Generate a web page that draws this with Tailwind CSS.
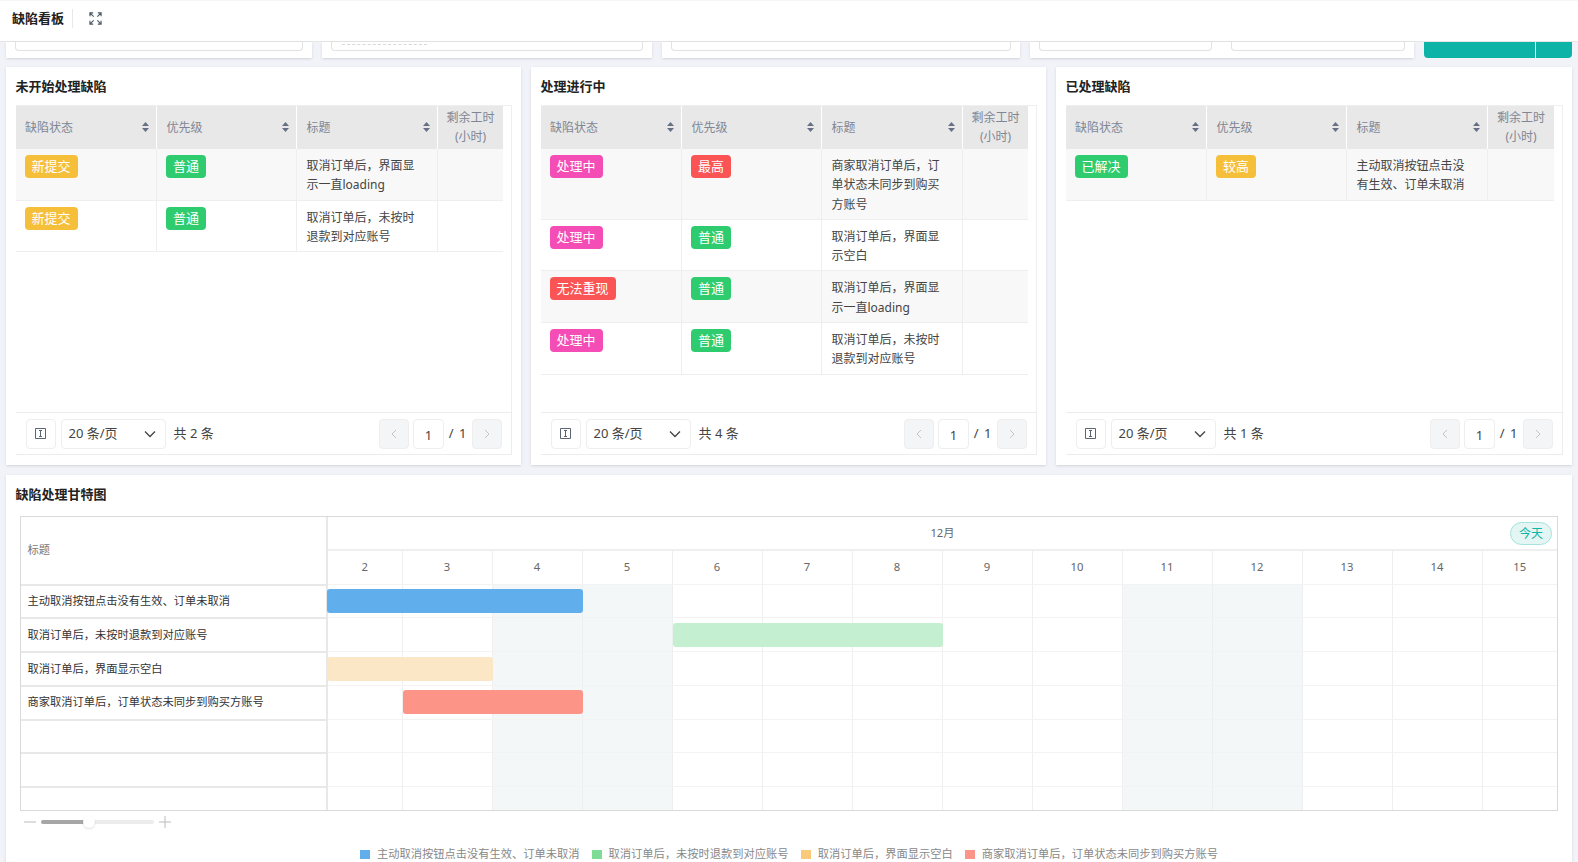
<!DOCTYPE html>
<html>
  <head>
    <meta charset="utf-8" />
    <script src="https://cdn.jsdelivr.net/npm/@tailwindcss/browser@4"></script>
  </head>
  <body class="h-[862px] overflow-hidden bg-[#f2f3f8] text-[#333] font-['Noto_Sans','Noto_Sans_CJK_SC',sans-serif]">
    <!-- header -->
    <header class="h-[42px] bg-white border-t border-t-[#f5f5f5] border-b border-b-[#e6e6e6] flex items-center pl-[12px] pb-[6px]">
      <h1 class="text-[13px] font-bold text-[#222] pr-[8px] border-r border-[#e8e8e8] leading-[19px]">缺陷看板</h1>
      <svg class="ml-[16px] w-[13px] h-[13px]" viewBox="0 0 14 14" fill="none" stroke="#4b5563" stroke-width="1.2">
        <path d="M1 4.500V1h3.500M13 4.500V1H9.500M1 9.500V13h3.500M13 9.500V13H9.500M1.500 1.500l3.500 3.500M12.500 1.500L9 5M1.500 12.500L5 9M12.500 12.500L9 9" />
      </svg>
    </header>

    <!-- filter row, scrolled mostly out of view -->
    <div class="h-[16px] flex pl-[6px] pr-[6px] gap-[10px]">
      <div class="w-[306px] bg-white shadow-sm px-[9px]">
        <div class="h-[9px] border border-t-0 border-[#e2e2e2] rounded-b-[4px]"></div>
      </div>
      <div class="w-[330px] bg-white shadow-sm px-[9px]">
        <div class="h-[9px] border border-t-0 border-[#e2e2e2] rounded-b-[4px] pl-[10px]">
          <div class="w-[85px] h-[3px] border-b border-dashed border-[#d8d8d8]"></div>
        </div>
      </div>
      <div class="w-[358px] bg-white shadow-sm px-[9px]">
        <div class="h-[9px] border border-t-0 border-[#e2e2e2] rounded-b-[4px]"></div>
      </div>
      <div class="w-[384px] bg-white shadow-sm flex gap-[19px] px-[9px]">
        <div class="w-[173px] h-[9px] border border-t-0 border-[#e2e2e2] rounded-b-[4px]"></div>
        <div class="w-[174px] h-[9px] border border-t-0 border-[#e2e2e2] rounded-b-[4px]"></div>
      </div>
      <div class="flex-1 flex bg-[#0db3a6] rounded-b-[4px]">
        <div class="flex-1 border-r border-white"></div>
        <div class="w-[36px]"></div>
      </div>
    </div>

    <!-- defect tables -->
    <div class="grid grid-cols-[515px_515px_1fr] gap-[10px] px-[6px] mt-[9px]">
      <!-- not started -->
      <section class="h-[398px] bg-white shadow-sm pl-[9.500px] pr-[9px] flex flex-col">
        <h2 class="h-[37.500px] pt-[9.500px] text-[13px] font-bold leading-[19px] text-[#222]">未开始处理缺陷</h2>
        <div class="flex-1 border-t border-x border-[#efefef] border-l-0 pr-[8px]">
          <table class="w-full table-fixed border-collapse text-[12px] leading-[19.300px]">
            <thead class="bg-[#e8e8e8] text-[#808695]">
              <tr class="h-[43.500px]">
                <th class="w-[141px] border-r border-white pl-[9.500px] pr-[7px] font-normal text-left"><div class="flex items-center justify-between">缺陷状态<svg class="w-[7px] h-[10px]" viewBox="0 0 7 10" fill="#667085"><path d="M3.500 0L7 4H0zM3.500 10L0 6h7z"/></svg></div></th>
                <th class="w-[140px] border-r border-white pl-[9.500px] pr-[7px] font-normal text-left"><div class="flex items-center justify-between">优先级<svg class="w-[7px] h-[10px]" viewBox="0 0 7 10" fill="#667085"><path d="M3.500 0L7 4H0zM3.500 10L0 6h7z"/></svg></div></th>
                <th class="w-[141px] border-r border-white pl-[9.500px] pr-[7px] font-normal text-left"><div class="flex items-center justify-between">标题<svg class="w-[7px] h-[10px]" viewBox="0 0 7 10" fill="#667085"><path d="M3.500 0L7 4H0zM3.500 10L0 6h7z"/></svg></div></th>
                <th class="font-normal text-center">剩余工时<br />(小时)</th>
              </tr>
            </thead>
            <tbody class="text-[#444]">
              <tr class="bg-[#f8f8f8] border-b border-[#eee] align-top">
                <td class="border-r border-[#eee] pl-[9px] py-[6px]"><span class="inline-block h-[23px] px-[7px] bg-[#f6bf3a] rounded-[4px] text-[13px] leading-[23px] text-white">新提交</span></td>
                <td class="border-r border-[#eee] pl-[9px] py-[6px]"><span class="inline-block h-[23px] px-[7px] bg-[#2ecc6e] rounded-[4px] text-[13px] leading-[23px] text-white">普通</span></td>
                <td class="border-r border-[#eee] pl-[9.500px] pr-[20px] pt-[7px] pb-[5px]">取消订单后，界面显示一直loading</td>
                <td></td>
              </tr>
              <tr class="border-b border-[#eee] align-top">
                <td class="border-r border-[#eee] pl-[9px] py-[6px]"><span class="inline-block h-[23px] px-[7px] bg-[#f6bf3a] rounded-[4px] text-[13px] leading-[23px] text-white">新提交</span></td>
                <td class="border-r border-[#eee] pl-[9px] py-[6px]"><span class="inline-block h-[23px] px-[7px] bg-[#2ecc6e] rounded-[4px] text-[13px] leading-[23px] text-white">普通</span></td>
                <td class="border-r border-[#eee] pl-[9.500px] pr-[20px] pt-[7px] pb-[5px]">取消订单后，未按时退款到对应账号</td>
                <td></td>
              </tr>
            </tbody>
          </table>
        </div>
        <div class="h-[43px] mb-[10px] border border-[#ececec] border-l-0 flex items-center pl-[10px] pr-[9px] text-[13px] text-[#444]">
          <button class="w-[30px] h-[30px] border border-[#eee] rounded-[4px] flex items-center justify-center">
            <svg class="w-[11px] h-[11px]" viewBox="0 0 11 11" fill="none" stroke="#5b6472"><path d="M.5.500h10v10H.500zM5.500 2.500v6M4 2.500h3M4 8.500h3"/></svg>
          </button>
          <div class="ml-[5px] w-[105px] h-[30px] pt-[1px] border border-[#eee] rounded-[4px] flex items-center justify-between pl-[7px] pr-[9px]">20 条/页
            <svg class="w-[12px] h-[8px]" viewBox="0 0 12 8" fill="none" stroke="#444" stroke-width="1.300"><path d="M1 1.500l5 5 5-5"/></svg>
          </div>
          <span class="ml-[8px] pt-[1px]">共 2 条</span>
          <button class="ml-auto w-[30px] h-[30px] bg-[#f4f5f7] border border-[#eee] rounded-[4px] flex items-center justify-center">
            <svg class="w-[6px] h-[10px]" viewBox="0 0 6 10" fill="none" stroke="#c0c4cc"><path d="M5 1L1 5l4 4"/></svg>
          </button>
          <div class="ml-[4px] w-[31px] h-[30px] border border-[#eee] rounded-[4px] text-center leading-[31px]">1</div>
          <span class="mx-[3px] w-[22px] text-center tracking-[1px]">/ 1</span>
          <button class="w-[30px] h-[30px] bg-[#f4f5f7] border border-[#eee] rounded-[4px] flex items-center justify-center">
            <svg class="w-[6px] h-[10px]" viewBox="0 0 6 10" fill="none" stroke="#c0c4cc"><path d="M1 1l4 4-4 4"/></svg>
          </button>
        </div>
      </section>

      <!-- in progress -->
      <section class="h-[398px] bg-white shadow-sm pl-[9.500px] pr-[9px] flex flex-col">
        <h2 class="h-[37.500px] pt-[9.500px] text-[13px] font-bold leading-[19px] text-[#222]">处理进行中</h2>
        <div class="flex-1 border-t border-x border-[#efefef] border-l-0 pr-[8px]">
          <table class="w-full table-fixed border-collapse text-[12px] leading-[19.300px]">
            <thead class="bg-[#e8e8e8] text-[#808695]">
              <tr class="h-[43.500px]">
                <th class="w-[141px] border-r border-white pl-[9.500px] pr-[7px] font-normal text-left"><div class="flex items-center justify-between">缺陷状态<svg class="w-[7px] h-[10px]" viewBox="0 0 7 10" fill="#667085"><path d="M3.500 0L7 4H0zM3.500 10L0 6h7z"/></svg></div></th>
                <th class="w-[140px] border-r border-white pl-[9.500px] pr-[7px] font-normal text-left"><div class="flex items-center justify-between">优先级<svg class="w-[7px] h-[10px]" viewBox="0 0 7 10" fill="#667085"><path d="M3.500 0L7 4H0zM3.500 10L0 6h7z"/></svg></div></th>
                <th class="w-[141px] border-r border-white pl-[9.500px] pr-[7px] font-normal text-left"><div class="flex items-center justify-between">标题<svg class="w-[7px] h-[10px]" viewBox="0 0 7 10" fill="#667085"><path d="M3.500 0L7 4H0zM3.500 10L0 6h7z"/></svg></div></th>
                <th class="font-normal text-center">剩余工时<br />(小时)</th>
              </tr>
            </thead>
            <tbody class="text-[#444]">
              <tr class="bg-[#f8f8f8] border-b border-[#eee] align-top">
                <td class="border-r border-[#eee] pl-[9px] py-[6px]"><span class="inline-block h-[23px] px-[7px] bg-[#f44db5] rounded-[4px] text-[13px] leading-[23px] text-white">处理中</span></td>
                <td class="border-r border-[#eee] pl-[9px] py-[6px]"><span class="inline-block h-[23px] px-[7px] bg-[#fb5454] rounded-[4px] text-[13px] leading-[23px] text-white">最高</span></td>
                <td class="border-r border-[#eee] pl-[9.500px] pr-[20px] pt-[7px] pb-[5px]">商家取消订单后，订单状态未同步到购买方账号</td>
                <td></td>
              </tr>
              <tr class="border-b border-[#eee] align-top">
                <td class="border-r border-[#eee] pl-[9px] py-[6px]"><span class="inline-block h-[23px] px-[7px] bg-[#f44db5] rounded-[4px] text-[13px] leading-[23px] text-white">处理中</span></td>
                <td class="border-r border-[#eee] pl-[9px] py-[6px]"><span class="inline-block h-[23px] px-[7px] bg-[#2ecc6e] rounded-[4px] text-[13px] leading-[23px] text-white">普通</span></td>
                <td class="border-r border-[#eee] pl-[9.500px] pr-[20px] pt-[7px] pb-[5px]">取消订单后，界面显示空白</td>
                <td></td>
              </tr>
              <tr class="bg-[#f8f8f8] border-b border-[#eee] align-top">
                <td class="border-r border-[#eee] pl-[9px] py-[6px]"><span class="inline-block h-[23px] px-[7px] bg-[#fb5454] rounded-[4px] text-[13px] leading-[23px] text-white">无法重现</span></td>
                <td class="border-r border-[#eee] pl-[9px] py-[6px]"><span class="inline-block h-[23px] px-[7px] bg-[#2ecc6e] rounded-[4px] text-[13px] leading-[23px] text-white">普通</span></td>
                <td class="border-r border-[#eee] pl-[9.500px] pr-[20px] pt-[7px] pb-[5px]">取消订单后，界面显示一直loading</td>
                <td></td>
              </tr>
              <tr class="border-b border-[#eee] align-top">
                <td class="border-r border-[#eee] pl-[9px] py-[6px]"><span class="inline-block h-[23px] px-[7px] bg-[#f44db5] rounded-[4px] text-[13px] leading-[23px] text-white">处理中</span></td>
                <td class="border-r border-[#eee] pl-[9px] py-[6px]"><span class="inline-block h-[23px] px-[7px] bg-[#2ecc6e] rounded-[4px] text-[13px] leading-[23px] text-white">普通</span></td>
                <td class="border-r border-[#eee] pl-[9.500px] pr-[20px] pt-[7px] pb-[5px]">取消订单后，未按时退款到对应账号</td>
                <td></td>
              </tr>
            </tbody>
          </table>
        </div>
        <div class="h-[43px] mb-[10px] border border-[#ececec] border-l-0 flex items-center pl-[10px] pr-[9px] text-[13px] text-[#444]">
          <button class="w-[30px] h-[30px] border border-[#eee] rounded-[4px] flex items-center justify-center">
            <svg class="w-[11px] h-[11px]" viewBox="0 0 11 11" fill="none" stroke="#5b6472"><path d="M.5.500h10v10H.500zM5.500 2.500v6M4 2.500h3M4 8.500h3"/></svg>
          </button>
          <div class="ml-[5px] w-[105px] h-[30px] pt-[1px] border border-[#eee] rounded-[4px] flex items-center justify-between pl-[7px] pr-[9px]">20 条/页
            <svg class="w-[12px] h-[8px]" viewBox="0 0 12 8" fill="none" stroke="#444" stroke-width="1.300"><path d="M1 1.500l5 5 5-5"/></svg>
          </div>
          <span class="ml-[8px] pt-[1px]">共 4 条</span>
          <button class="ml-auto w-[30px] h-[30px] bg-[#f4f5f7] border border-[#eee] rounded-[4px] flex items-center justify-center">
            <svg class="w-[6px] h-[10px]" viewBox="0 0 6 10" fill="none" stroke="#c0c4cc"><path d="M5 1L1 5l4 4"/></svg>
          </button>
          <div class="ml-[4px] w-[31px] h-[30px] border border-[#eee] rounded-[4px] text-center leading-[31px]">1</div>
          <span class="mx-[3px] w-[22px] text-center tracking-[1px]">/ 1</span>
          <button class="w-[30px] h-[30px] bg-[#f4f5f7] border border-[#eee] rounded-[4px] flex items-center justify-center">
            <svg class="w-[6px] h-[10px]" viewBox="0 0 6 10" fill="none" stroke="#c0c4cc"><path d="M1 1l4 4-4 4"/></svg>
          </button>
        </div>
      </section>

      <!-- done -->
      <section class="h-[398px] bg-white shadow-sm pl-[9.500px] pr-[9px] flex flex-col">
        <h2 class="h-[37.500px] pt-[9.500px] text-[13px] font-bold leading-[19px] text-[#222]">已处理缺陷</h2>
        <div class="flex-1 border-t border-x border-[#efefef] border-l-0 pr-[8px]">
          <table class="w-full table-fixed border-collapse text-[12px] leading-[19.300px]">
            <thead class="bg-[#e8e8e8] text-[#808695]">
              <tr class="h-[43.500px]">
                <th class="w-[141px] border-r border-white pl-[9.500px] pr-[7px] font-normal text-left"><div class="flex items-center justify-between">缺陷状态<svg class="w-[7px] h-[10px]" viewBox="0 0 7 10" fill="#667085"><path d="M3.500 0L7 4H0zM3.500 10L0 6h7z"/></svg></div></th>
                <th class="w-[140px] border-r border-white pl-[9.500px] pr-[7px] font-normal text-left"><div class="flex items-center justify-between">优先级<svg class="w-[7px] h-[10px]" viewBox="0 0 7 10" fill="#667085"><path d="M3.500 0L7 4H0zM3.500 10L0 6h7z"/></svg></div></th>
                <th class="w-[141px] border-r border-white pl-[9.500px] pr-[7px] font-normal text-left"><div class="flex items-center justify-between">标题<svg class="w-[7px] h-[10px]" viewBox="0 0 7 10" fill="#667085"><path d="M3.500 0L7 4H0zM3.500 10L0 6h7z"/></svg></div></th>
                <th class="font-normal text-center">剩余工时<br />(小时)</th>
              </tr>
            </thead>
            <tbody class="text-[#444]">
              <tr class="bg-[#f8f8f8] border-b border-[#eee] align-top">
                <td class="border-r border-[#eee] pl-[9px] py-[6px]"><span class="inline-block h-[23px] px-[7px] bg-[#2ecc6e] rounded-[4px] text-[13px] leading-[23px] text-white">已解决</span></td>
                <td class="border-r border-[#eee] pl-[9px] py-[6px]"><span class="inline-block h-[23px] px-[7px] bg-[#f6bf3a] rounded-[4px] text-[13px] leading-[23px] text-white">较高</span></td>
                <td class="border-r border-[#eee] pl-[9.500px] pr-[20px] pt-[7px] pb-[5px]">主动取消按钮点击没有生效、订单未取消</td>
                <td></td>
              </tr>
            </tbody>
          </table>
        </div>
        <div class="h-[43px] mb-[10px] border border-[#ececec] border-l-0 flex items-center pl-[10px] pr-[9px] text-[13px] text-[#444]">
          <button class="w-[30px] h-[30px] border border-[#eee] rounded-[4px] flex items-center justify-center">
            <svg class="w-[11px] h-[11px]" viewBox="0 0 11 11" fill="none" stroke="#5b6472"><path d="M.5.500h10v10H.500zM5.500 2.500v6M4 2.500h3M4 8.500h3"/></svg>
          </button>
          <div class="ml-[5px] w-[105px] h-[30px] pt-[1px] border border-[#eee] rounded-[4px] flex items-center justify-between pl-[7px] pr-[9px]">20 条/页
            <svg class="w-[12px] h-[8px]" viewBox="0 0 12 8" fill="none" stroke="#444" stroke-width="1.300"><path d="M1 1.500l5 5 5-5"/></svg>
          </div>
          <span class="ml-[8px] pt-[1px]">共 1 条</span>
          <button class="ml-auto w-[30px] h-[30px] bg-[#f4f5f7] border border-[#eee] rounded-[4px] flex items-center justify-center">
            <svg class="w-[6px] h-[10px]" viewBox="0 0 6 10" fill="none" stroke="#c0c4cc"><path d="M5 1L1 5l4 4"/></svg>
          </button>
          <div class="ml-[4px] w-[31px] h-[30px] border border-[#eee] rounded-[4px] text-center leading-[31px]">1</div>
          <span class="mx-[3px] w-[22px] text-center tracking-[1px]">/ 1</span>
          <button class="w-[30px] h-[30px] bg-[#f4f5f7] border border-[#eee] rounded-[4px] flex items-center justify-center">
            <svg class="w-[6px] h-[10px]" viewBox="0 0 6 10" fill="none" stroke="#c0c4cc"><path d="M1 1l4 4-4 4"/></svg>
          </button>
        </div>
      </section>
    </div>

    <!-- gantt -->
    <section class="mx-[6px] mt-[10px] h-[400px] bg-white shadow-sm">
      <h2 class="h-[41px] pt-[9.500px] pl-[9.500px] text-[13px] font-bold leading-[19px] text-[#222]">缺陷处理甘特图</h2>
      <div class="ml-[13.500px] w-[1538.500px] h-[295px] border border-[#d9d9d9] flex text-[11.250px] text-[#333]">
        <!-- title column -->
        <div class="w-[307.500px] shrink-0 border-r-2 border-[#e8e8e8] flex flex-col">
          <div class="h-[68.500px] pt-[1px] border-b-2 border-[#e8e8e8] flex items-center pl-[7px] text-[#777]">标题</div>
          <div class="h-[33.800px] border-b-2 border-[#e8e8e8] flex items-center pl-[7px]">主动取消按钮点击没有生效、订单未取消</div>
          <div class="h-[33.800px] border-b-2 border-[#e8e8e8] flex items-center pl-[7px]">取消订单后，未按时退款到对应账号</div>
          <div class="h-[33.800px] border-b-2 border-[#e8e8e8] flex items-center pl-[7px]">取消订单后，界面显示空白</div>
          <div class="h-[33.800px] border-b-2 border-[#e8e8e8] flex items-center pl-[7px]">商家取消订单后，订单状态未同步到购买方账号</div>
          <div class="h-[33.800px] border-b-2 border-[#e8e8e8]"></div>
          <div class="h-[33.800px] border-b-2 border-[#e8e8e8]"></div>
        </div>
        <!-- timeline -->
        <div class="flex-1 min-w-0 flex flex-col">
          <div class="relative h-[33.500px] pt-[1px] border-b-2 border-[#efefef] flex items-center justify-center text-[#666]">12月
            <span class="absolute right-[5px] top-[5px] w-[42px] h-[23px] rounded-full border border-[#a5e3dc] bg-[#e4f6f4] text-[#14b3a5] text-[12px] leading-[21px] text-center">今天</span>
          </div>
          <div class="h-[34px] grid grid-cols-[74.500px_repeat(12,90px)_1fr] text-center leading-[32px] text-[#666] border-b border-[#f3f3f3]">
            <div class="border-r border-[#efefef]">2</div>
            <div class="border-r border-[#efefef]">3</div>
            <div class="border-r border-[#efefef]">4</div>
            <div class="border-r border-[#efefef]">5</div>
            <div class="border-r border-[#efefef]">6</div>
            <div class="border-r border-[#efefef]">7</div>
            <div class="border-r border-[#efefef]">8</div>
            <div class="border-r border-[#efefef]">9</div>
            <div class="border-r border-[#efefef]">10</div>
            <div class="border-r border-[#efefef]">11</div>
            <div class="border-r border-[#efefef]">12</div>
            <div class="border-r border-[#efefef]">13</div>
            <div class="border-r border-[#efefef]">14</div>
            <div>15</div>
          </div>
          <div class="flex-1 grid grid-cols-[74.500px_repeat(12,90px)_1fr] grid-rows-[repeat(6,33.800px)_1fr]">
            <!-- day columns -->
            <div class="col-start-1 row-start-1 row-span-7 border-r border-[#f0f0f0]"></div>
            <div class="col-start-2 row-start-1 row-span-7 border-r border-[#f0f0f0]"></div>
            <div class="col-start-3 row-start-1 row-span-7 border-r border-[#ecefef] bg-[#f4f7f7]"></div>
            <div class="col-start-4 row-start-1 row-span-7 border-r border-[#ecefef] bg-[#f4f7f7]"></div>
            <div class="col-start-5 row-start-1 row-span-7 border-r border-[#f0f0f0]"></div>
            <div class="col-start-6 row-start-1 row-span-7 border-r border-[#f0f0f0]"></div>
            <div class="col-start-7 row-start-1 row-span-7 border-r border-[#f0f0f0]"></div>
            <div class="col-start-8 row-start-1 row-span-7 border-r border-[#f0f0f0]"></div>
            <div class="col-start-9 row-start-1 row-span-7 border-r border-[#f0f0f0]"></div>
            <div class="col-start-10 row-start-1 row-span-7 border-r border-[#ecefef] bg-[#f4f7f7]"></div>
            <div class="col-start-11 row-start-1 row-span-7 border-r border-[#ecefef] bg-[#f4f7f7]"></div>
            <div class="col-start-12 row-start-1 row-span-7 border-r border-[#f0f0f0]"></div>
            <div class="col-start-13 row-start-1 row-span-7 border-r border-[#f0f0f0]"></div>
            <!-- row lines -->
            <div class="col-span-full row-start-1 border-b border-[#f3f3f3]"></div>
            <div class="col-span-full row-start-2 border-b border-[#f3f3f3]"></div>
            <div class="col-span-full row-start-3 border-b border-[#f3f3f3]"></div>
            <div class="col-span-full row-start-4 border-b border-[#f3f3f3]"></div>
            <div class="col-span-full row-start-5 border-b border-[#f3f3f3]"></div>
            <div class="col-span-full row-start-6 border-b border-[#f3f3f3]"></div>
            <!-- bars -->
            <div class="col-start-1 col-end-4 row-start-1 mt-[4px] -ml-px h-[24px] rounded-[3px] bg-[#61aeed]"></div>
            <div class="col-start-5 col-end-8 row-start-2 mt-[5px] h-[24px] rounded-[3px] bg-[#c4efd0]"></div>
            <div class="col-start-1 col-end-3 row-start-3 mt-[5px] -ml-px h-[24px] rounded-[3px] bg-[#fbe7c6]"></div>
            <div class="col-start-2 col-end-4 row-start-4 mt-[4px] h-[24px] rounded-[3px] bg-[#fc9488]"></div>
          </div>
        </div>
      </div>
      <!-- zoom slider -->
      <div class="flex items-center h-[22px] ml-[18px] text-[#b5b5b5]">
        <svg class="w-[12px] h-[12px]" viewBox="0 0 12 12" stroke="#bbb"><path d="M0 6h12"/></svg>
        <div class="relative ml-[5px] w-[113px] h-[4px] rounded-full bg-[#ececec]">
          <div class="w-[44px] h-[4px] rounded-full bg-[#a6a6a6]"></div>
          <div class="absolute left-[42px] top-[-4px] w-[12px] h-[12px] rounded-full bg-white shadow-sm"></div>
        </div>
        <svg class="ml-[5px] w-[12px] h-[12px]" viewBox="0 0 12 12" stroke="#bbb"><path d="M0 6h12M6 0v12"/></svg>
      </div>
      <!-- legend -->
      <div class="mt-[13px] flex justify-center gap-[12px] text-[11.250px] leading-[16px] text-[#888]">
        <span class="flex items-center gap-[7px]"><i class="w-[10px] h-[9px] bg-[#61aeed]"></i>主动取消按钮点击没有生效、订单未取消</span>
        <span class="flex items-center gap-[7px]"><i class="w-[10px] h-[9px] bg-[#7fdc95]"></i>取消订单后，未按时退款到对应账号</span>
        <span class="flex items-center gap-[7px]"><i class="w-[10px] h-[9px] bg-[#fbc97a]"></i>取消订单后，界面显示空白</span>
        <span class="flex items-center gap-[7px]"><i class="w-[10px] h-[9px] bg-[#fc9488]"></i>商家取消订单后，订单状态未同步到购买方账号</span>
      </div>
    </section>
  </body>
</html>
